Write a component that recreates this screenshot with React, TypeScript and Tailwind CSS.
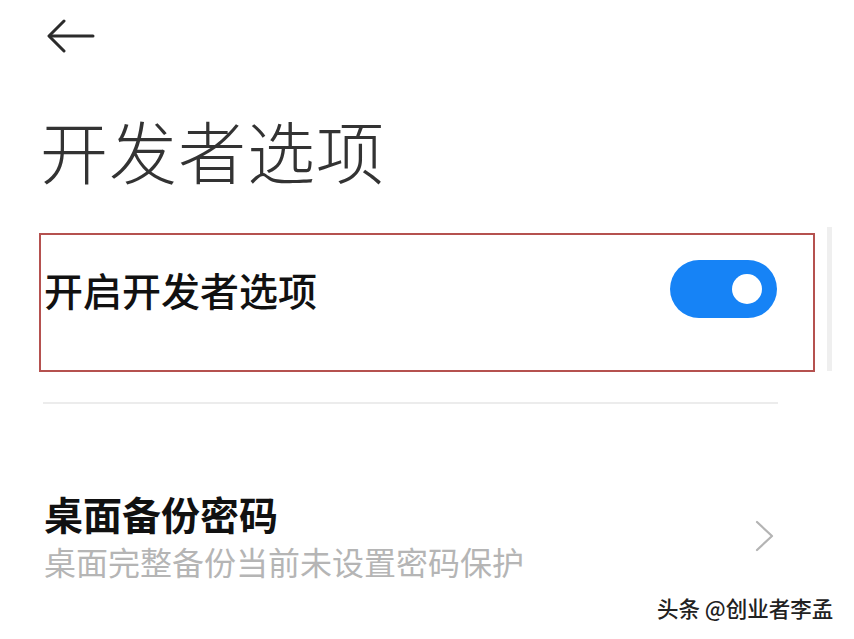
import React, { useState } from 'react';

const BackArrow: React.FC = () => (
  <svg width="48" height="34" viewBox="0 0 48 34" fill="none" stroke="#2b2b2b" strokeWidth={3} strokeLinecap="round" strokeLinejoin="round">
    <path d="M46 17H3" />
    <path d="M17 2L2 17l15 15" />
  </svg>
);

const Chevron: React.FC = () => (
  <svg width="20" height="32" viewBox="0 0 20 32" fill="none" stroke="#b4b4b4" strokeWidth={2.2} strokeLinecap="round" strokeLinejoin="round">
    <path d="M2 2l15 14L2 30" />
  </svg>
);

const App: React.FC = () => {
  const [enabled, setEnabled] = useState(true);

  return (
    <div className="relative w-[854px] h-[639px] overflow-hidden bg-white font-['Noto_Sans_CJK_SC',sans-serif]">
      {/* Header */}
      <div className="pt-[19px] pl-[47px]">
        <BackArrow />
      </div>

      <h1 className="mt-[63px] pl-[40px] text-[68px] leading-none font-light text-[#333] tracking-[1px]">
        开发者选项
      </h1>

      {/* Highlighted toggle row */}
      <div className="mt-[49px] ml-[39px] flex">
        <div className="w-[776px] h-[139px] border-2 border-[#b5514f] pl-[3px] pr-[36px] pt-[25px]">
          <div className="flex items-center justify-between h-[58px]">
            <span className="text-[39px] leading-none font-medium text-[#111]">开启开发者选项</span>
            <button
              onClick={() => setEnabled(v => !v)}
              className={`w-[107px] h-[58px] rounded-full flex items-center px-[15px] ${enabled ? 'bg-[#1683f6] justify-end' : 'bg-[#d8d8d8] justify-start'}`}
            >
              <span className="w-[30px] h-[30px] rounded-full bg-white" />
            </button>
          </div>
        </div>
        <div className="ml-[12px] -mt-[6px] w-[5px] h-[144px] bg-[#efefef]" />
      </div>

      <div className="mt-[30px] ml-[43px] w-[735px] h-[2px] bg-[#ececec]" />

      {/* Item row */}
      <div className="mt-[90px] pl-[44px] pr-[79px] flex items-center justify-between">
        <div className="flex flex-col">
          <span className="text-[39px] leading-none font-bold text-[#111]">桌面备份密码</span>
          <span className="mt-[12px] text-[32px] leading-none text-[#b5b5b5]">桌面完整备份当前未设置密码保护</span>
        </div>
        <Chevron />
      </div>

      {/* Watermark */}
      <div className="absolute left-[657px] top-[597px] text-[21.5px] leading-none font-medium text-[#222] [text-shadow:0_0_2px_#fff]">
        头条 @创业者李孟
      </div>
    </div>
  );
};

export default App;
